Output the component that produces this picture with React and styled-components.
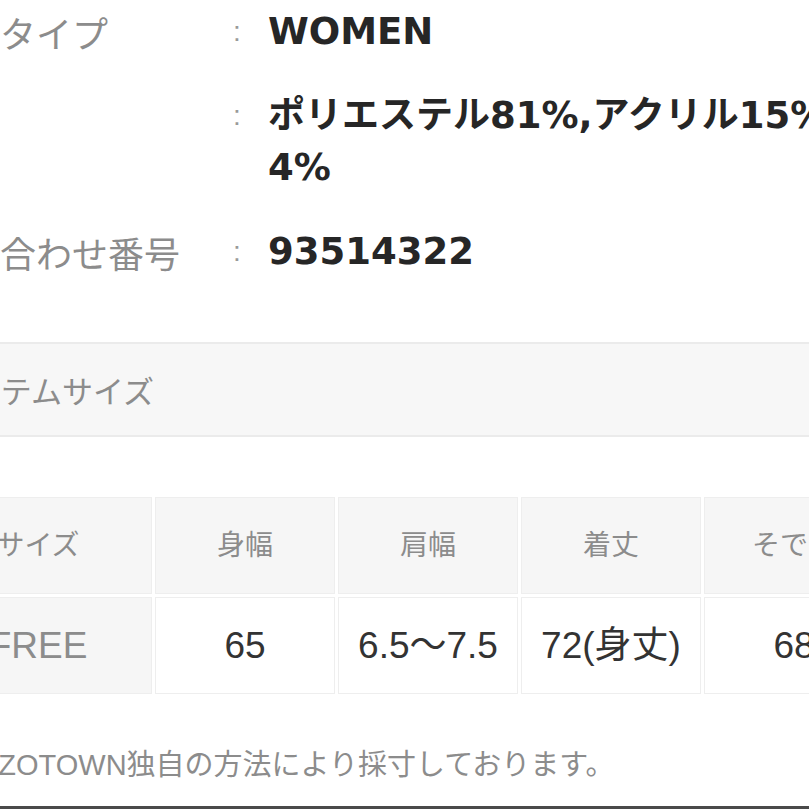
import styled, { createGlobalStyle } from "styled-components";

const GlobalStyle = createGlobalStyle`
  html, body {
    margin: 0;
    padding: 0;
    background: #ffffff;
    overflow: hidden;
  }
  body {
    font-family: "Liberation Sans", "Noto Sans CJK JP", sans-serif;
    -webkit-font-smoothing: antialiased;
  }
`;

const Page = styled.div`
  width: 809px;
  height: 809px;
  box-sizing: border-box;
  overflow: hidden;
  display: flex;
  flex-direction: column;
  align-items: flex-start;
  border-bottom: 3px solid #4a4a4a;
`;

const Specs = styled.dl`
  margin: 0;
  padding-top: 6px;
  display: grid;
  grid-template-columns: 233px 35px 745px;
  row-gap: 32px;
  width: 1013px;
  flex-shrink: 0;
`;

const Label = styled.dt`
  grid-column: 1;
  margin: 0;
  font-family: "Noto Sans CJK JP", sans-serif;
  font-size: 36px;
  line-height: 52px;
  color: #8c8c8c;
  white-space: nowrap;
`;

const Colon = styled.span`
  grid-column: 2;
  font-size: 28px;
  line-height: 52px;
  color: #9a9a9a;
`;

const Value = styled.dd`
  grid-column: 3;
  margin: 0;
  font-family: "DejaVu Sans", "Noto Sans CJK JP", sans-serif;
  font-size: 37px;
  line-height: 52px;
  font-weight: 700;
  color: #262626;
`;

const Section = styled.div`
  margin-top: 64px;
  align-self: stretch;
  height: 91px;
  display: flex;
  align-items: center;
  background: #f7f7f7;
  border-top: 2px solid #ebebeb;
  border-bottom: 2px solid #ebebeb;
`;

const SectionTitle = styled.h2`
  margin: 0 0 0 -59px;
  font-family: "Noto Sans CJK JP", sans-serif;
  font-size: 31px;
  font-weight: 400;
  color: #8c8c8c;
  white-space: nowrap;
`;

const SizeTable = styled.table`
  margin: 57px 0 0 -79px;
  width: 966px;
  flex-shrink: 0;
  border-collapse: separate;
  border-spacing: 3px;
  table-layout: fixed;
`;

const Cell = styled.td`
  width: ${(p) => (p.$first ? "226px" : "178px")};
  height: 95px;
  padding: 0;
  text-align: center;
  vertical-align: middle;
  white-space: nowrap;
  line-height: 40px;
  border: 1px solid #eeeeee;
  background: ${(p) => (p.$shade ? "#f6f6f6" : "#ffffff")};
  color: ${(p) => (p.$muted ? "#8c8c8c" : "#333333")};
  font-size: ${(p) => (p.$head ? "28px" : "37px")};
`;

const Note = styled.p`
  margin: 44px 0 0 -42px;
  font-size: 29px;
  color: #8c8c8c;
  white-space: nowrap;
`;

const specs = [
  { label: "タイプ", value: "WOMEN" },
  { label: "", value: "ポリエステル81%,アクリル15%,ナイロン4%" },
  { label: "合わせ番号", value: "93514322" },
];

const heads = ["サイズ", "身幅", "肩幅", "着丈", "そで丈"];
const sizes = ["FREE", "65", "6.5〜7.5", "72(身丈)", "68"];

export default function App() {
  return (
    <>
      <GlobalStyle />
      <Page>
        <Specs>
          {specs.map((s, i) => (
            <div key={i} style={{ display: "contents" }}>
              <Label>{s.label}</Label>
              <Colon>:</Colon>
              <Value>{s.value}</Value>
            </div>
          ))}
        </Specs>

        <Section>
          <SectionTitle>アイテムサイズ</SectionTitle>
        </Section>

        <SizeTable>
          <tbody>
            <tr>
              {heads.map((h, i) => (
                <Cell key={h} $first={i === 0} $shade $muted $head>
                  {h}
                </Cell>
              ))}
            </tr>
            <tr>
              {sizes.map((v, i) => (
                <Cell key={v} $first={i === 0} $shade={i === 0} $muted={i === 0}>
                  {v}
                </Cell>
              ))}
            </tr>
          </tbody>
        </SizeTable>

        <Note>ZOZOTOWN独自の方法により採寸しております。</Note>
      </Page>
    </>
  );
}
